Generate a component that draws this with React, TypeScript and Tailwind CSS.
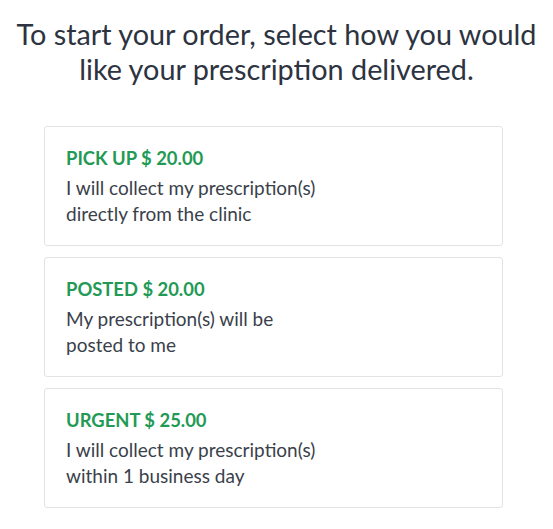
const options = [
  {
    title: "PICK UP $ 20.00",
    lines: ["I will collect my prescription(s)", "directly from the clinic"],
  },
  {
    title: "POSTED $ 20.00",
    lines: ["My prescription(s) will be", "posted to me"],
  },
  {
    title: "URGENT $ 25.00",
    lines: ["I will collect my prescription(s)", "within 1 business day"],
  },
]

export default function App() {
  return (
    <div
      className="min-h-screen bg-white px-[44px] pt-[17px]"
      style={{ fontFamily: "Lato, 'Open Sans', sans-serif" }}
    >
      <h1 className="-mx-[44px] text-center text-[28.8px] leading-[35px] text-[#2d3340]">
        To start your order, select how you would
        <br />
        like your prescription delivered.
      </h1>
      <div className="mt-[39px] flex w-[459px] flex-col gap-[11px]">
        {options.map((o) => (
          <div
            key={o.title}
            role="button"
            className="h-[120px] cursor-pointer rounded-[3px] border border-[#e3e3e3] bg-white px-[21px] pt-[19px]"
          >
            <div className="text-[18.4px] font-bold leading-[24px] text-[#229a55]">
              {o.title}
            </div>
            <p className="mt-[5px] text-[19px] leading-[26px] text-[#3a3f4b]">
              {o.lines[0]}
              <br />
              {o.lines[1]}
            </p>
          </div>
        ))}
      </div>
    </div>
  )
}
